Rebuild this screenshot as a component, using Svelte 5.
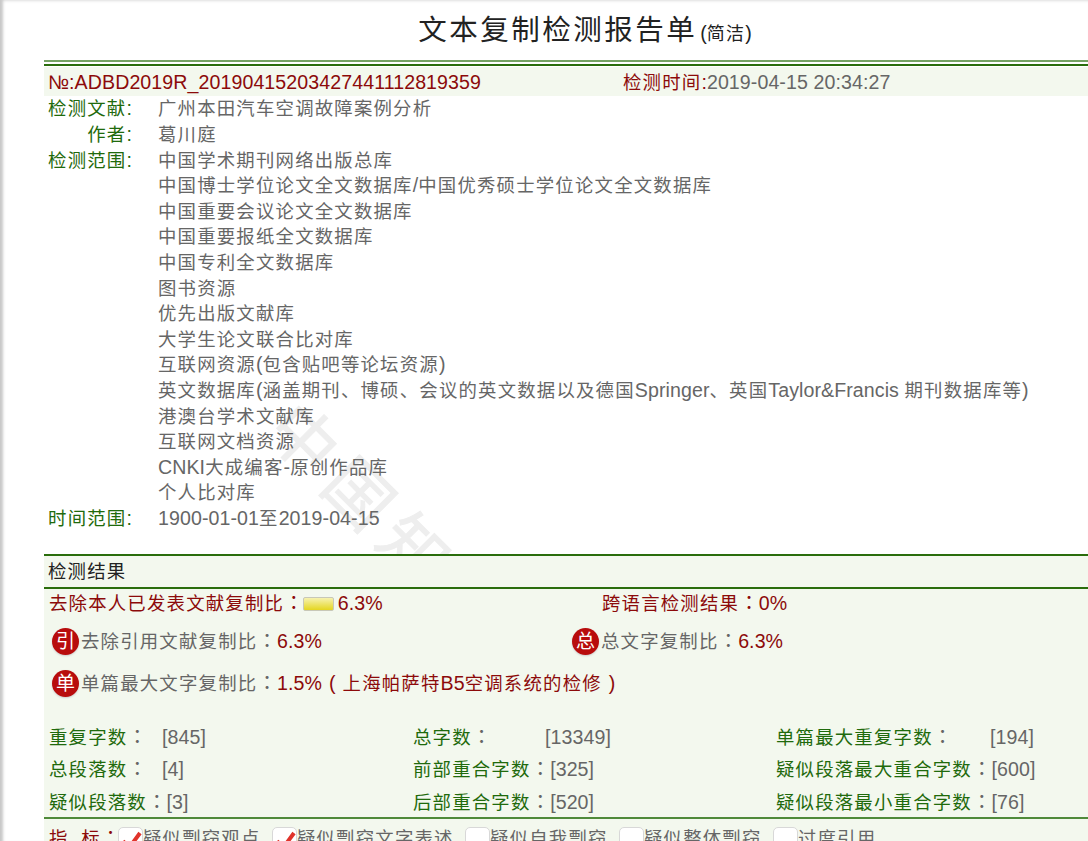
<script>
  const sources = [
    "中国学术期刊网络出版总库",
    "中国博士学位论文全文数据库/中国优秀硕士学位论文全文数据库",
    "中国重要会议论文全文数据库",
    "中国重要报纸全文数据库",
    "中国专利全文数据库",
    "图书资源",
    "优先出版文献库",
    "大学生论文联合比对库",
    "互联网资源(包含贴吧等论坛资源)",
    "英文数据库(涵盖期刊、博硕、会议的英文数据以及德国Springer、英国Taylor&Francis 期刊数据库等)",
    "港澳台学术文献库",
    "互联网文档资源",
    "CNKI大成编客-原创作品库",
    "个人比对库"
  ];

  const counts = [
    ["重复字数", "[845]", "总字数", "[13349]", "单篇最大重复字数", "[194]"],
    ["总段落数", "[4]", "前部重合字数", "[325]", "疑似段落最大重合字数", "[600]"],
    ["疑似段落数", "[3]", "后部重合字数", "[520]", "疑似段落最小重合字数", "[76]"]
  ];

  const flags = [
    { text: "疑似剽窃观点", checked: true },
    { text: "疑似剽窃文字表述", checked: true },
    { text: "疑似自我剽窃", checked: false },
    { text: "疑似整体剽窃", checked: false },
    { text: "过度引用", checked: false }
  ];

  // latin and CJK runs get different sizes, the CJK glyphs sit smaller in their cell
  function runs(text) {
    return text.match(/[\x00-\x7f№]+|[：]+|[^\x00-\x7f№：]+/g).map((part) => ({
      part,
      kind: /^[\x00-\x7f№]/.test(part) ? "lat" : part[0] === "：" ? "punct" : "cjk"
    }));
  }
</script>

{#snippet t(text)}{#each runs(text) as r}<span class={r.kind}>{r.part}</span>{/each}{/snippet}

<div class="page">
  <h1>文本复制检测报告单<small>{@render t("(简洁)")}</small></h1>

  <div class="sheet">
    <div class="watermark">中国知网</div>

    <div class="double-rule"></div>
    <div class="number-row">
      <span class="red number">{@render t("№:ADBD2019R_20190415203427441112819359")}</span>
      <span><span class="red">{@render t("检测时间:")}</span>{@render t("2019-04-15 20:34:27")}</span>
    </div>

    <div class="meta">
      <div class="label">{@render t("检测文献:")}</div>
      <div>{@render t("广州本田汽车空调故障案例分析")}</div>
      <div class="label">{@render t("作者:")}</div>
      <div>{@render t("葛川庭")}</div>
      <div class="label">{@render t("检测范围:")}</div>
      <div>
        {#each sources as source}
          <div>{@render t(source)}</div>
        {/each}
      </div>
      <div class="label">{@render t("时间范围:")}</div>
      <div>{@render t("1900-01-01至2019-04-15")}</div>
    </div>

    <section class="result">
      <h2>{@render t("检测结果")}</h2>

      <div class="ratio-row first">
        <div class="red">{@render t("去除本人已发表文献复制比：")}<span class="bar"></span>{@render t("6.3%")}</div>
        <div class="red cross">{@render t("跨语言检测结果：0%")}</div>
      </div>
      <div class="ratio-row second">
        <div class="with-badge">
          <span class="badge">引</span>
          <span>{@render t("去除引用文献复制比：")}<span class="red">{@render t("6.3%")}</span></span>
        </div>
        <div class="with-badge total">
          <span class="badge">总</span>
          <span>{@render t("总文字复制比：")}<span class="red">{@render t("6.3%")}</span></span>
        </div>
      </div>
      <div class="ratio-row third">
        <div class="with-badge">
          <span class="badge">单</span>
          <span>{@render t("单篇最大文字复制比：")}<span class="red">{@render t("1.5% ( 上海帕萨特B5空调系统的检修 )")}</span></span>
        </div>
      </div>

      <div class="counts">
        {#each counts as row}
          {#each [0, 2, 4] as i}
            <div class="count">
              <span class="count-label col{i}"><span class="green">{@render t(row[i])}</span>{@render t("：")}</span>{@render t(row[i + 1])}
            </div>
          {/each}
        {/each}
      </div>

      <div class="flags">
        <span class="red flag-title">{@render t("指\u00a0\u00a0标：")}</span>
        {#each flags as flag}
          <span class="flag">
            <span class="box">
              {#if flag.checked}
                <svg viewBox="0 0 24 24" width="24" height="24">
                  <path d="M4 13 L10 20 L21 5" fill="none" stroke="#e0332b" stroke-width="4" />
                </svg>
              {/if}
            </span>
            <span>{@render t(flag.text)}</span>
          </span>
        {/each}
      </div>
    </section>
  </div>
</div>

<style>
  :global(body) {
    background: #ffffff;
    overflow: hidden;
  }

  .page {
    height: 841px;
    overflow: hidden;
    box-sizing: border-box;
    padding-left: 44px;
    font-family: "Liberation Sans", "Noto Sans CJK SC", sans-serif;
    font-size: 19.6px;
    line-height: 25.6px;
    color: #666666;
    box-shadow: inset 5px 0 3px -2px #c8c8c8, inset 0 3px 3px -2px #e0e0e0;
  }

  .lat {
    font-size: 19.6px;
    line-height: 1;
    letter-spacing: 0.08px;
  }

  .third .lat {
    word-spacing: 1.5px;
  }

  .cjk {
    font-size: 18.4px;
    line-height: 1;
    letter-spacing: 1.2px;
  }

  .punct {
    font-family: "Noto Sans CJK TC", sans-serif;
    font-size: 19.6px;
    line-height: 1;
  }

  h1 {
    margin: 0;
    padding: 10px 0 0 38px;
    height: 50px;
    box-sizing: border-box;
    text-align: center;
    font-size: 28.5px;
    letter-spacing: 2.5px;
    line-height: 40px;
    font-weight: normal;
    color: #222222;
  }

  h1 small {
    margin-left: 3px;
    letter-spacing: 0;
  }

  h1 small .cjk {
    font-size: 18px;
  }

  .sheet {
    position: relative;
    width: 1044px;
  }

  .watermark {
    position: absolute;
    left: 259px;
    top: 333px;
    font-size: 66px;
    line-height: 66px;
    letter-spacing: 12px;
    white-space: nowrap;
    color: #eeeeee;
    -webkit-text-stroke: 1px #eeeeee;
    transform: rotate(45deg);
    transform-origin: 0 0;
  }

  .double-rule {
    position: relative;
    margin-top: 10px;
    height: 2px;
    border-top: 2px solid #75a263;
    border-bottom: 2px solid #2a6d0c;
    margin-bottom: 1px;
  }

  .number-row {
    position: relative;
    display: flex;
    height: 29px;
    padding: 2px 0 0 4px;
    align-items: center;
    background: #f3f8ee;
    box-sizing: border-box;
  }

  .number {
    width: 575px;
  }

  .red {
    color: #8c0a0a;
  }

  .green {
    color: #1f6a0c;
  }

  .meta {
    position: relative;
    display: grid;
    grid-template-columns: 84px 1fr;
    column-gap: 26px;
    padding: 0.4px 0 0 4px;
  }

  .label {
    color: #1f6a0c;
    text-align: right;
    white-space: nowrap;
  }

  .result {
    position: relative;
    margin-top: 23px;
    background: #f3f8ee;
    border-top: 2px solid #2a6d0c;
  }

  h2 {
    margin: 0;
    height: 31px;
    padding-left: 4px;
    font-size: 19.6px;
    line-height: 31px;
    font-weight: normal;
    color: #222222;
    border-bottom: 2px solid #2a6d0c;
  }

  .ratio-row {
    display: flex;
    padding-left: 5px;
    white-space: nowrap;
    align-items: center;
  }

  .ratio-row > div:first-child {
    width: 520px;
  }

  .first {
    height: 29px;
  }

  .cross {
    padding-left: 33px;
  }

  .second {
    height: 46px;
  }

  .third {
    height: 38px;
  }

  .with-badge {
    display: flex;
    align-items: center;
    padding-left: 3px;
  }

  .total {
    padding-left: 0;
  }

  .bar {
    display: inline-block;
    box-sizing: border-box;
    width: 31px;
    height: 14px;
    margin-right: 4px;
    margin-left: -1px;
    vertical-align: -1px;
    border: 1px solid #c8c8b8;
    border-radius: 2px;
    background: linear-gradient(#f6f2b0, #e4d620);
  }

  .badge {
    flex: none;
    width: 27px;
    height: 27px;
    margin-right: 2px;
    border-radius: 50%;
    background: #b80c0c;
    color: #ffffff;
    text-align: center;
    font-size: 19px;
    line-height: 27px;
    box-shadow: 0 1px 2px #cccccc;
  }

  .counts {
    display: grid;
    grid-template-columns: 364px 363px 1fr;
    padding: 19px 0 0 5px;
    grid-auto-rows: 32.5px;
    align-items: center;
    border-bottom: 2px solid #4f8a3a;
    height: 117px;
    box-sizing: border-box;
    white-space: nowrap;
  }

  .count-label {
    display: inline-block;
  }

  .col0 {
    min-width: 113px;
  }

  .col2 {
    min-width: 132px;
  }

  .col4 {
    min-width: 214px;
  }

  .flags {
    display: flex;
    align-items: center;
    padding: 7px 0 0 5px;
    white-space: nowrap;
  }

  .flag-title {
    width: 69px;
  }

  .flag {
    display: flex;
    align-items: center;
    margin-right: 11.4px;
  }

  .box {
    display: block;
    flex: none;
    box-sizing: border-box;
    width: 25px;
    height: 25px;
    border: 1px solid #d8d8d8;
    border-radius: 5px;
    background: #ffffff;
    overflow: hidden;
  }

  .box svg {
    display: block;
  }
</style>
